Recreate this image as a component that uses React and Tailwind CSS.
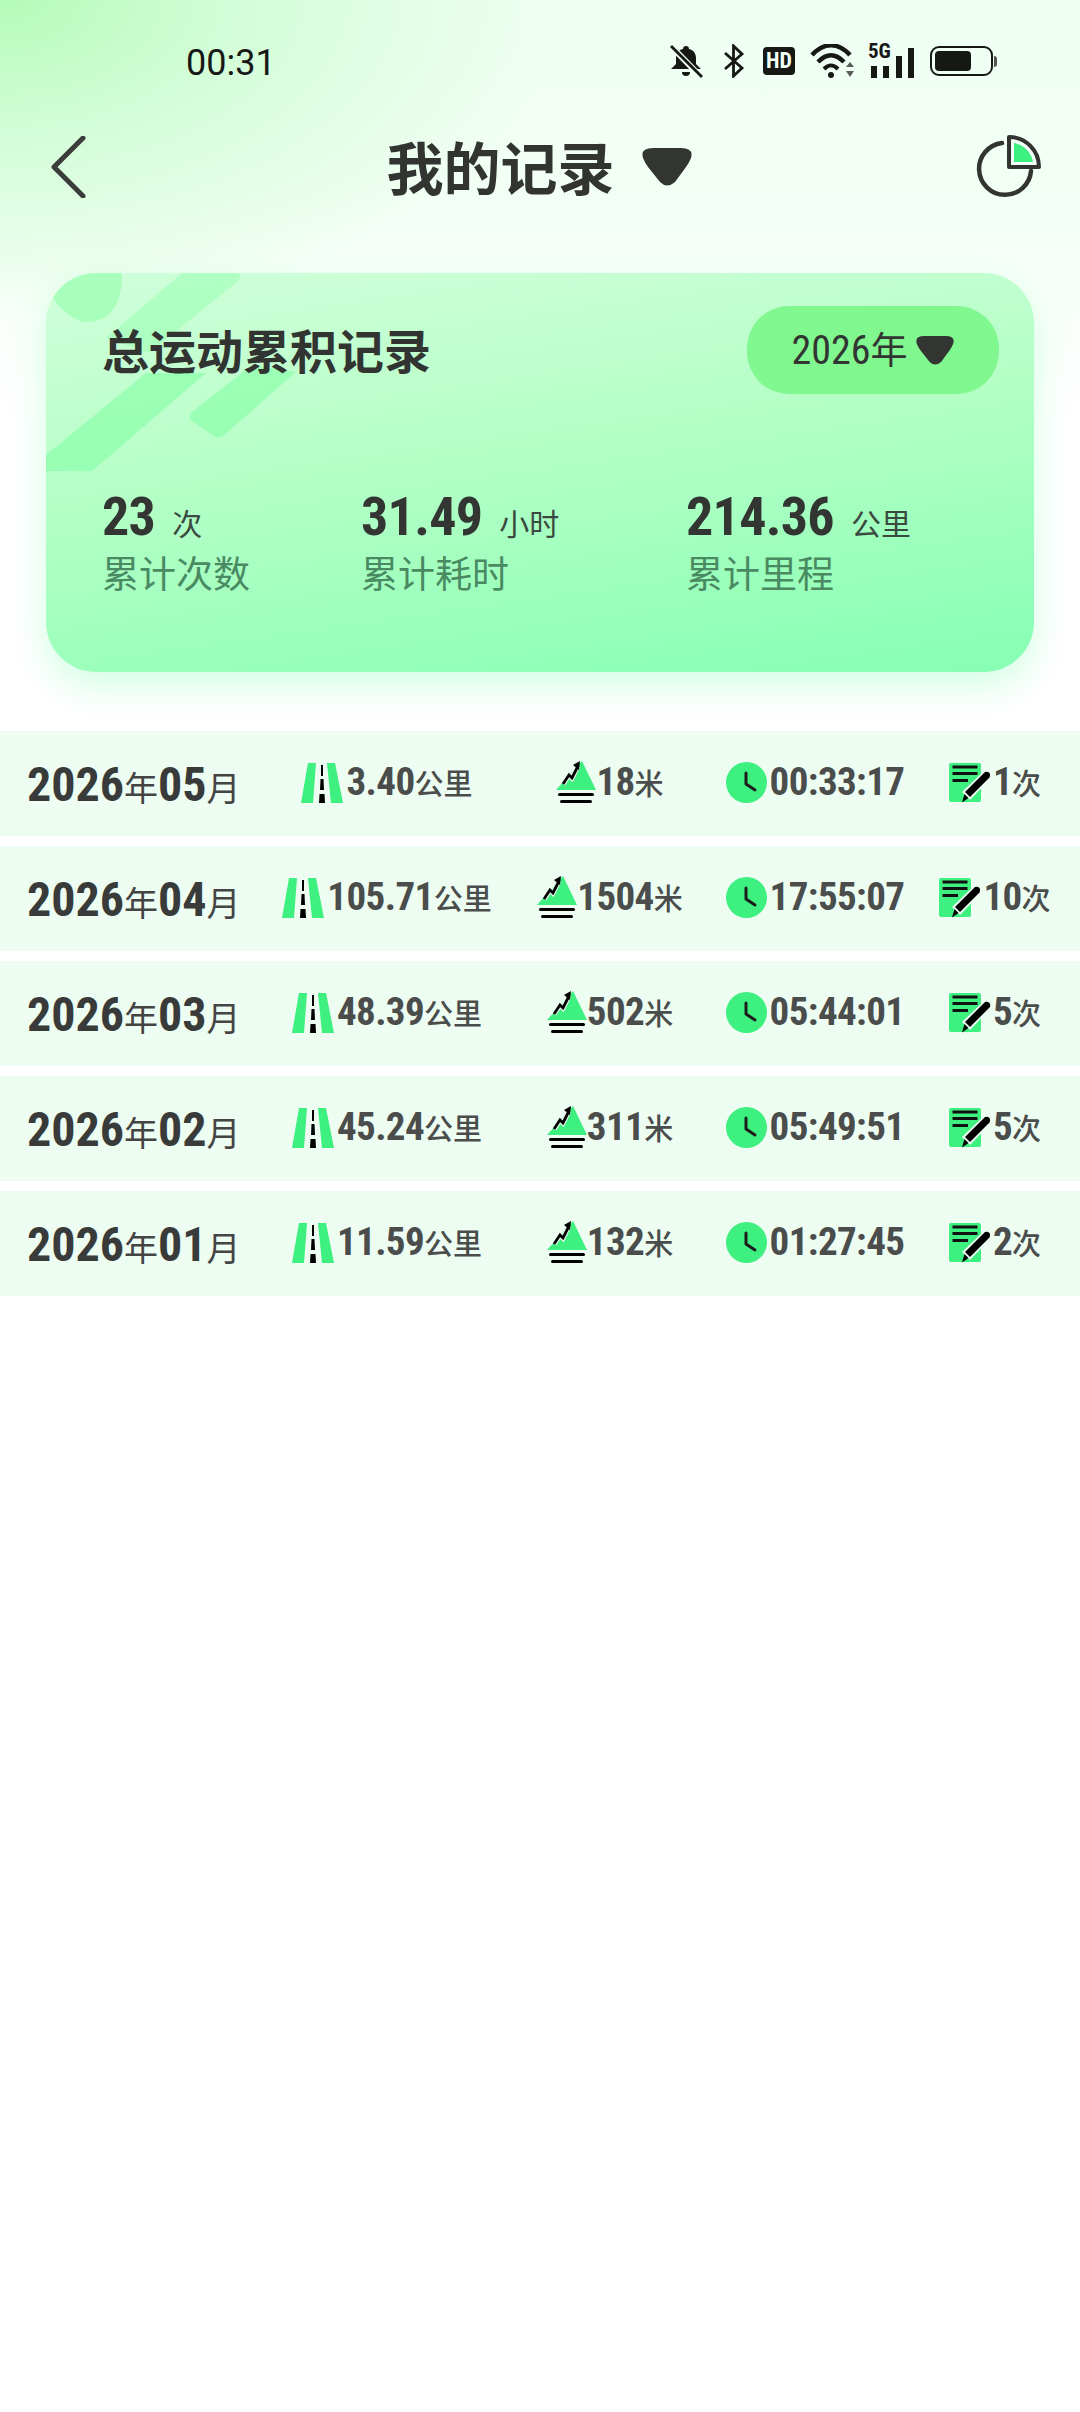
const rows = [
    { month: '05', km: '3.40', climb: '18', time: '00:33:17', count: '1' },
    { month: '04', km: '105.71', climb: '1504', time: '17:55:07', count: '10' },
    { month: '03', km: '48.39', climb: '502', time: '05:44:01', count: '5' },
    { month: '02', km: '45.24', climb: '311', time: '05:49:51', count: '5' },
    { month: '01', km: '11.59', climb: '132', time: '01:27:45', count: '2' },
];

const stats = [
    { value: '23', unit: '次', label: '累计次数', width: 'w-[259px]' },
    { value: '31.49', unit: '小时', label: '累计耗时', width: 'w-[325px]' },
    { value: '214.36', unit: '公里', label: '累计里程', width: 'w-[300px]' },
];

function Caret({ className }) {
    return (
        <svg viewBox="0 0 50 38" className={className}>
            <path d="M11 0H39Q52 0 49 10Q47 15 44 19L33 34Q25 41 18 34L6 19Q3 15 1 10Q-2 0 11 0Z" fill="#333533" />
        </svg>
    );
}

function StatusIcons() {
    return (
        <div className="flex items-center text-[#161816]">
            {/* muted bell */}
            <svg viewBox="0 0 34 34" className="w-[34px] h-[34px] mr-[20px]">
                <path d="M17 2c-2 0-3 1-3 3-5 1-7 5-7 9v6l-5 5h30l-5-5v-6c0-4-2-8-7-9 0-2-1-3-3-3z" fill="currentColor" />
                <path d="M13 28h8a4 4 0 0 1-8 0z" fill="currentColor" />
                <path d="M1 1L32 33" stroke="#f1fff4" strokeWidth="6" />
                <path d="M2 2L33 33" stroke="currentColor" strokeWidth="2.800" />
            </svg>
            {/* bluetooth */}
            <svg viewBox="0 0 22 34" className="w-[22px] h-[34px] mr-[18px]">
                <path d="M2 9L19 24L10.500 32V2L19 10L2 25" fill="none" stroke="currentColor" strokeWidth="2.800" />
            </svg>
            <div className="w-[32px] h-[28px] mr-[15px] rounded-[4px] bg-[#161816] text-[#f1fff4] flex items-center justify-center font-['Roboto',sans-serif] font-stretch-condensed font-bold text-[22px] leading-none">
                HD
            </div>
            {/* wifi */}
            <svg viewBox="0 0 46 34" className="w-[46px] h-[34px] mr-[12px]">
                <path d="M2 11C14 -2 28 -2 40 11" fill="none" stroke="currentColor" strokeWidth="4.500" />
                <path d="M8 18C17 9 25 9 34 18" fill="none" stroke="currentColor" strokeWidth="4.500" />
                <path d="M14 25C19 20 23 20 28 25" fill="none" stroke="currentColor" strokeWidth="4" />
                <circle cx="21" cy="31" r="3" fill="currentColor" />
                <path d="M36 23L40 18L44 23ZM36 27L40 33L44 27Z" fill="#5a5c5a" />
            </svg>
            {/* 5G and signal */}
            <div className="relative w-[46px] h-[34px] mr-[16px]">
                <span className="absolute left-0 -top-[3px] font-['Roboto',sans-serif] font-stretch-condensed font-bold text-[21px] leading-none">5G</span>
                <div className="absolute inset-0 flex items-end justify-between pl-[3px]">
                    <span className="w-[6px] h-[12px] bg-[#161816]" />
                    <span className="w-[6px] h-[12px] bg-[#161816]" />
                    <span className="w-[6px] h-[22px] bg-[#161816]" />
                    <span className="w-[6px] h-[30px] bg-[#161816]" />
                </div>
            </div>
            {/* battery */}
            <div className="flex items-center">
                <div className="w-[63px] h-[30px] rounded-[9px] border-2 border-[#161816] p-[3px]">
                    <div className="w-[36px] h-full rounded-[4px] bg-[#161816]" />
                </div>
                <span className="w-[3px] h-[11px] ml-[1px] rounded-r-sm bg-[#555]" />
            </div>
        </div>
    );
}

function RoadIcon() {
    return (
        <svg viewBox="0 0 42 40" className="w-[42px] h-[40px] shrink-0">
            <path d="M7 0H15L12 40H0Z" fill="#3df07f" />
            <path d="M26 0H34L42 40H30Z" fill="#3df07f" />
            <path d="M20 2H22V13H20ZM19.500 16H22.500L23 27H19ZM18.500 31H23.500L24 40H18Z" fill="#000" />
        </svg>
    );
}

function MountainIcon() {
    return (
        <svg viewBox="0 0 40 44" className="w-[40px] h-[44px] shrink-0">
            <path d="M26 0L40 29H0Z" fill="#3df07f" />
            <path d="M7 23L13 14L16 17L22 5" fill="none" stroke="#edfdf2" strokeWidth="5" />
            <path d="M7 23L13 14L16 17L22 5" fill="none" stroke="#000" strokeWidth="2.800" />
            <path d="M17 4L24 0L23 9Z" fill="#000" />
            <rect x="2" y="32" width="36" height="3" rx="1.500" fill="#000" />
            <rect x="4" y="39" width="32" height="3" rx="1.500" fill="#000" />
        </svg>
    );
}

function ClockIcon() {
    return (
        <svg viewBox="0 0 41 41" className="w-[41px] h-[41px] shrink-0">
            <circle cx="20.500" cy="20.500" r="20.500" fill="#3df07f" />
            <path d="M20 11V22L29 28" fill="none" stroke="#1c1c1c" strokeWidth="3" strokeLinecap="round" strokeLinejoin="round" />
        </svg>
    );
}

function NoteIcon() {
    return (
        <svg viewBox="0 0 44 40" className="w-[44px] h-[40px] shrink-0">
            <rect x="0" y="0" width="32" height="39" rx="2" fill="#3df07f" />
            <path d="M3.500 4H28.500M3.500 10.500H28.500M3.500 17.500H19" stroke="#111" strokeWidth="2.800" fill="none" />
            <path d="M13 29L37 6L44 13L21 37Z" fill="#edfdf2" />
            <path d="M16 29L36 9Q38.500 8 40.500 10Q42 12.500 40.500 14.500L21 34Z" fill="#000" />
            <path d="M15.500 31L19.500 35L13 39.500Z" fill="#000" />
        </svg>
    );
}

function Value({ value, unit }) {
    return (
        <span className="flex items-baseline whitespace-nowrap text-[#4a4d4b] font-['Roboto',sans-serif] font-stretch-condensed font-bold text-[39px] tracking-[-0.6px] leading-none">
            {value}
            {unit && <span className="font-['Noto_Sans_CJK_SC',sans-serif] font-medium text-[29px] tracking-normal">{unit}</span>}
        </span>
    );
}

function MonthRow({ row }) {
    return (
        <div className="h-[105px] bg-[#edfdf2] pr-[14px] grid grid-cols-[260px_254px_192px_218px_142px] items-center">
            <div className="pl-[27px] pt-[3px] flex items-baseline text-[#383b39] font-['Roboto',sans-serif] font-stretch-condensed font-bold text-[48px] leading-none">
                2026
                <span className="font-['Noto_Sans_CJK_SC',sans-serif] font-normal text-[34px] text-[#444]">年</span>
                {row.month}
                <span className="font-['Noto_Sans_CJK_SC',sans-serif] font-normal text-[34px] text-[#444]">月</span>
            </div>
            <div className="flex items-center justify-center gap-[3px] pb-[2px]">
                <RoadIcon />
                <Value value={row.km} unit="公里" />
            </div>
            <div className="flex items-center justify-center pb-[2px]">
                <MountainIcon />
                <Value value={row.climb} unit="米" />
            </div>
            <div className="flex items-center justify-center gap-[3px] pb-[2px]">
                <ClockIcon />
                <Value value={row.time} />
            </div>
            <div className="flex items-center justify-center pb-[2px]">
                <NoteIcon />
                <Value value={row.count} unit="次" />
            </div>
        </div>
    );
}

export default function App() {
    return (
        <div className="w-[1080px] min-h-[2412px] bg-white bg-[radial-gradient(ellipse_560px_320px_at_0px_0px,#b4fbb9_0%,#d2fdd6_40%,rgba(240,255,244,0)_100%),linear-gradient(180deg,#effff3_0%,#f2fff5_190px,#ffffff_420px)] bg-no-repeat font-['Noto_Sans_CJK_SC',sans-serif]">
            {/* status bar */}
            <div className="h-[122px] pl-[186px] pr-[83px] pt-[44px] flex items-start justify-between">
                <span className="font-['Roboto',sans-serif] text-[36px] leading-[38px] text-[#161816]">00:31</span>
                <StatusIcons />
            </div>

            {/* header */}
            <div className="h-[90px] pl-[50px] pr-[38px] flex items-center justify-between">
                <svg viewBox="0 0 36 62" className="w-[36px] h-[62px]">
                    <path d="M33 2L4 31L33 60" fill="none" stroke="#3a3d3b" strokeWidth="5" strokeLinecap="round" strokeLinejoin="round" />
                </svg>
                <div className="flex items-center gap-[27px] ml-[16px] -mt-[3px]">
                    <span className="text-[57px] leading-none font-bold text-[#323432]">我的记录</span>
                    <Caret className="w-[50px] h-[38px] mt-[3px]" />
                </div>
                <svg viewBox="0 0 66 64" className="w-[66px] h-[64px]">
                    <path d="M26 8A26 26 0 1 0 55 36" fill="none" stroke="#323432" strokeWidth="4.500" strokeLinecap="round" />
                    <path d="M33 2V32H63A30 30 0 0 0 33 2Z" fill="#f4fff7" stroke="#323432" strokeWidth="4" strokeLinejoin="round" />
                    <path d="M38 8V27H57A23 23 0 0 0 38 8Z" fill="#3df07f" />
                </svg>
            </div>

            {/* summary card */}
            <div className="relative mx-[46px] mt-[61px] h-[399px] rounded-[50px] overflow-hidden bg-[linear-gradient(172deg,#d0ffda_0%,#b4ffc6_45%,#86ffb3_100%)] pt-[33px] shadow-[0_14px_34px_rgba(110,255,165,0.3)]">
                <svg viewBox="0 0 986 399" className="absolute inset-0 w-[986px] h-[399px]">
                    <path d="M0 0H76Q76 48 41 49Q26 49 8 27Z" fill="#8fffa8" fillOpacity="0.6" />
                    <path d="M136 0H190Q198 1 192 8L103 80L60 65Z" fill="#86ffa4" fillOpacity="0.4" />
                    <path d="M100 100H160L46 198H0V182Z" fill="#7cffa0" fillOpacity="0.55" />
                    <path d="M206 92L250 99L178 162Q173 166 168 163L146 148Q141 144 146 139Z" fill="#7cffa0" fillOpacity="0.55" />
                </svg>

                <div className="relative pl-[56px] pr-[35px] flex items-center justify-between">
                    <span className="text-[47px] leading-[60px] font-bold text-[#323432] pb-[2px]">总运动累积记录</span>
                    <div className="w-[252px] h-[88px] rounded-[42px] bg-[#80f78f] flex items-center justify-center gap-[9px]">
                        <span className="flex items-baseline text-[#333533] font-['Roboto',sans-serif] font-stretch-condensed text-[40px] leading-none">
                            2026<span className="font-['Noto_Sans_CJK_SC',sans-serif] text-[37px]">年</span>
                        </span>
                        <Caret className="w-[38px] h-[29px]" />
                    </div>
                </div>

                <div className="relative pl-[56px] mt-[96px] flex">
                    {stats.map((s) => (
                        <div key={s.label} className={s.width}>
                            <div className="flex items-baseline gap-[17px]">
                                <span className="font-['Roboto',sans-serif] font-stretch-condensed font-bold text-[54px] tracking-[-0.7px] leading-none text-[#333533]">{s.value}</span>
                                <span className="text-[30px] leading-none text-[#3a4a40]">{s.unit}</span>
                            </div>
                            <div className="mt-[4px] text-[37px] leading-[48px] text-[#4a8a62]">{s.label}</div>
                        </div>
                    ))}
                </div>
            </div>

            {/* monthly rows */}
            <div className="mt-[59px] flex flex-col gap-[10px]">
                {rows.map((r) => (
                    <MonthRow key={r.month} row={r} />
                ))}
            </div>
        </div>
    );
}
